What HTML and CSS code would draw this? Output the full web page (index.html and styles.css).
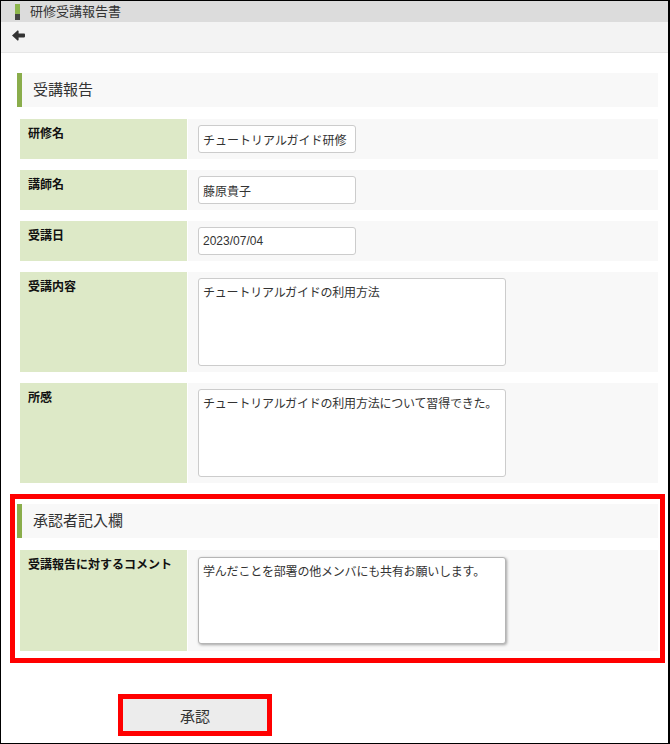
FILE: index.html
```html
<!DOCTYPE html>
<html lang="ja">
<head>
<meta charset="utf-8">
<title>研修受講報告書</title>
<link rel="stylesheet" href="styles.css">
</head>
<body>
<div class="page">
  <div class="titlebar">
    <span class="marker"></span>
    <span class="title">研修受講報告書</span>
  </div>
  <div class="navbar">
    <svg class="back" width="13" height="11" viewBox="0 0 13 11" aria-hidden="true">
      <path d="M0 5.5 L5.8 0.2 L6.6 1 L6.6 3.6 L12.2 3.6 Q13 3.6 13 4.4 L13 6.6 Q13 7.4 12.2 7.4 L6.6 7.4 L6.6 10 L5.8 10.8 Z" fill="#333"/>
    </svg>
  </div>
  <div class="content">
    <section class="section">
      <h2 class="sec-head">受講報告</h2>
      <div class="rows">
        <div class="row">
          <div class="label">研修名</div>
          <div class="value"><input class="field" type="text" value="チュートリアルガイド研修"></div>
        </div>
        <div class="row">
          <div class="label">講師名</div>
          <div class="value"><input class="field" type="text" value="藤原貴子"></div>
        </div>
        <div class="row">
          <div class="label">受講日</div>
          <div class="value"><input class="field" type="text" value="2023/07/04"></div>
        </div>
        <div class="row">
          <div class="label">受講内容</div>
          <div class="value"><textarea class="area">チュートリアルガイドの利用方法</textarea></div>
        </div>
        <div class="row">
          <div class="label">所感</div>
          <div class="value"><textarea class="area">チュートリアルガイドの利用方法について習得できた。</textarea></div>
        </div>
      </div>
    </section>
    <div class="highlight">
      <section class="section">
        <h2 class="sec-head">承認者記入欄</h2>
        <div class="rows">
          <div class="row row-tall">
            <div class="label">受講報告に対するコメント</div>
            <div class="value value-tall"><textarea class="area area-shadow">学んだことを部署の他メンバにも共有お願いします。</textarea></div>
          </div>
        </div>
      </section>
    </div>
    <div class="btn-wrap">
      <button class="btn" type="button">承認</button>
    </div>
  </div>
</div>
</body>
</html>
```

FILE: styles.css
```css
html, body {
  margin: 0;
  padding: 0;
  background: #fff;
}

.page {
  box-sizing: border-box;
  width: 670px;
  height: 744px;
  border: 1px solid #000;
  border-right-width: 2px;
  overflow: hidden;
  font-family: "Liberation Sans", "Noto Sans CJK JP", sans-serif;
  color: #333;
  background: #fff;
}

.titlebar {
  height: 21px;
  background: #dcdcdc;
  display: flex;
  align-items: center;
  padding-left: 14px;
}

.marker {
  width: 5px;
  height: 16px;
  margin-top: 1px;
  background: linear-gradient(to bottom, #8db64c 0, #8db64c 62%, #454545 62%, #454545 100%);
  margin-right: 10px;
}

.title {
  font-size: 13px;
  line-height: 21px;
  color: #333;
}

.navbar {
  box-sizing: border-box;
  height: 31px;
  background: #f3f3f3;
  border-bottom: 1px solid #e6e6e6;
  padding-left: 11px;
  padding-top: 8px;
  display: flex;
  align-items: flex-start;
}

.back {
  display: block;
}

.content {
  padding: 20px 10px 0 16px;
}

.section {
  margin: 0;
}

.sec-head {
  margin: 0;
  height: 34px;
  line-height: 34px;
  background: #f8f8f8;
  border-left: 5px solid #8aad4b;
  padding-left: 11px;
  font-size: 15px;
  font-weight: normal;
  color: #333;
}

.rows {
  margin-top: 12px;
  margin-left: 3px;
  display: flex;
  flex-direction: column;
  gap: 11px;
}

.row {
  display: flex;
}

.label {
  width: 167px;
  flex: none;
  background: #dde9c7;
  margin-right: 1px;
  padding: 6px 8px;
  box-sizing: border-box;
  font-size: 12px;
  line-height: 18px;
  font-weight: bold;
  color: #111;
}

.value {
  flex: 1;
  background: #f8f8f8;
  padding: 6px 10px;
}

.value-tall {
  padding: 7px 10px;
}

.field {
  display: block;
  box-sizing: border-box;
  width: 158px;
  height: 28px;
  margin: 0;
  border: 1px solid #ccc;
  border-radius: 3px;
  padding: 0 4px;
  font-family: "Liberation Sans", "Noto Sans CJK JP", sans-serif;
  font-size: 12px;
  color: #333;
  background: #fff;
}

.area {
  display: block;
  box-sizing: border-box;
  width: 308px;
  height: 88px;
  margin: 0;
  border: 1px solid #ccc;
  border-radius: 3px;
  padding: 5px 2px 5px 4px;
  font-family: "Liberation Sans", "Noto Sans CJK JP", sans-serif;
  font-size: 12px;
  line-height: 18px;
  letter-spacing: -0.2px;
  color: #333;
  background: #fff;
  resize: none;
  overflow: hidden;
}

.area-shadow {
  height: 87px;
  border-color: #b5b5b5;
  box-shadow: 1px 1px 3px rgba(0, 0, 0, 0.35);
}

.highlight {
  margin: 11px -7px 0 -7px;
  border: 5px solid #ff0000;
  padding: 5px 2px 7px 2px;
}

.btn-wrap {
  margin-top: 31px;
  margin-left: 101px;
  width: 144px;
  border: 5px solid #ff0000;
}

.btn {
  display: block;
  width: 144px;
  height: 32px;
  margin: 0;
  border: none;
  background: #ececec;
  font-family: "Liberation Sans", "Noto Sans CJK JP", sans-serif;
  font-size: 15px;
  color: #333;
  padding: 0;
}
```
